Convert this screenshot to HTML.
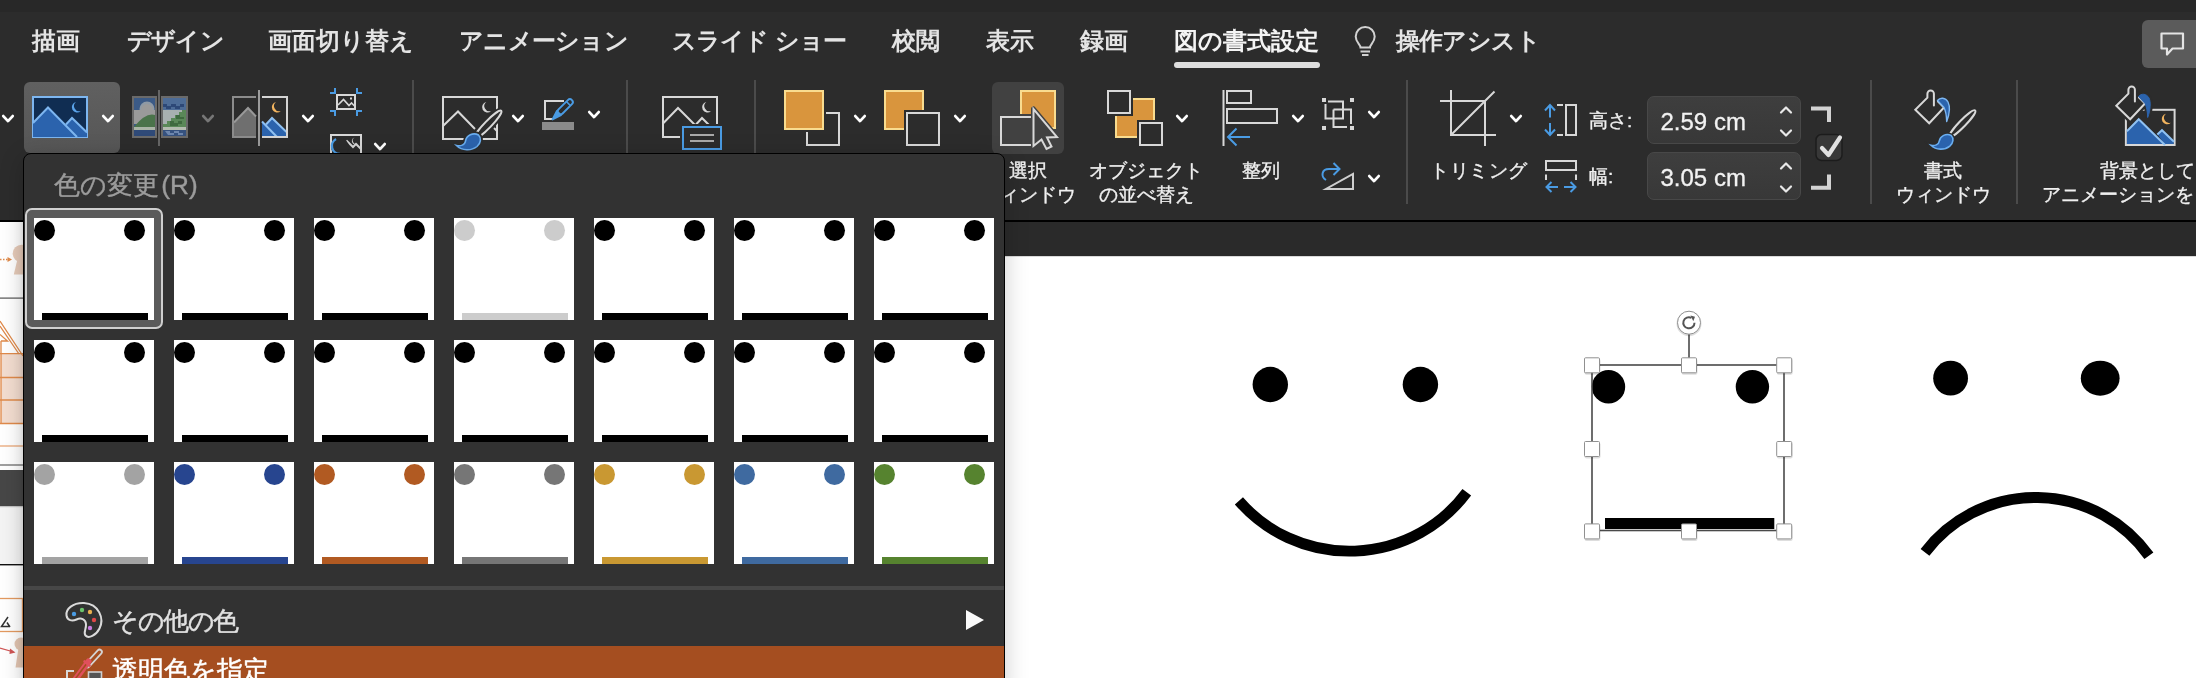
<!DOCTYPE html>
<html lang="ja">
<head>
<meta charset="utf-8">
<title>PowerPoint</title>
<style>
*{box-sizing:border-box;margin:0;padding:0}
html,body{width:2196px;height:678px;overflow:hidden;background:#2c2c2c}
body{position:relative;font-family:"Liberation Sans",sans-serif;color:#ececec}
.abs{position:absolute}
#titlebar{position:absolute;left:0;top:0;width:2196px;height:12px;background:#282828}
#ribbon{position:absolute;left:0;top:12px;width:2196px;height:208px;background:#2c2c2c}
#ribbonline{position:absolute;left:0;top:220px;width:2196px;height:2px;background:#000}
#below{position:absolute;left:0;top:222px;width:2196px;height:34px;background:#2a2a2a}
.tab{position:absolute;top:26px;height:30px;line-height:30px;font-size:24px;font-weight:bold;color:#e4e4e4;white-space:nowrap}
.tab.on{color:#f4f4f4}
.lbl{position:absolute;font-size:19px;line-height:24px;color:#f0f0f0;white-space:nowrap;text-align:center;-webkit-text-stroke:.35px #f0f0f0}
.sep{position:absolute;top:80px;width:2px;height:124px;background:#4b4b4b}
.btnbg{position:absolute;border-radius:6px}
.field{position:absolute;left:1647px;width:154px;height:48px;border-radius:7px;border:1px solid #484848;background:linear-gradient(#3e3e3e,#383838);font-size:24px;line-height:49px;color:#f2f2f2;padding-left:12.5px;-webkit-text-stroke:.3px #f2f2f2;white-space:nowrap}
#icons{position:absolute;left:0;top:0;width:2196px;height:222px}
#slide{position:absolute;left:1004px;top:256px;width:1192px;height:422px;background:#fff;border-top:1px solid #dadada}
#leftstrip{position:absolute;left:0;top:222px;width:24px;height:456px;background:#fff;overflow:hidden}
#popup{position:absolute;left:23px;top:153px;width:982px;height:540px;background:#323232;border:1px solid #000;border-radius:8px 8px 0 0;box-shadow:0 5px 24px rgba(0,0,0,.2);overflow:hidden}
#popin{position:absolute;left:0;top:-1px;width:980px;height:540px}
#popup .title{position:absolute;left:30px;top:16px;font-size:26.2px;line-height:32px;color:#9c9c9c;white-space:nowrap;word-spacing:-5px;-webkit-text-stroke:.4px #9c9c9c}
.th{position:absolute;width:120px;height:102px;background:#fff;overflow:hidden}
.th i{position:absolute;top:2px;width:21px;height:21px;border-radius:50%;background:var(--c)}
.th i.l{left:0}
.th i.r{left:90px}
.th b{position:absolute;left:8px;top:95px;width:106px;height:7px;background:var(--c)}
#selring{position:absolute;left:1px;top:55px;width:138px;height:121px;border:2px solid #cfcfcf;border-radius:7px;background:#5b5b5b}
#popsep{position:absolute;left:0;top:433px;width:980px;height:4px;background:#474747}
.mi{position:absolute;left:0;width:980px;height:56px}
.mi span{position:absolute;left:89px;font-size:25.5px;line-height:32px;white-space:nowrap;-webkit-text-stroke:.45px currentColor}
#mi2{top:493px;background:#a54e20;height:60px}
</style>
</head>
<body>
<div id="titlebar"></div>
<div id="ribbon"></div>

<!-- ribbon tabs -->
<div class="tab" style="left:32px">描画</div>
<div class="tab" style="left:127px;letter-spacing:-0.8px">デザイン</div>
<div class="tab" style="left:268px">画面切り替え</div>
<div class="tab" style="left:459px;letter-spacing:-0.75px">アニメーション</div>
<div class="tab" style="left:672px;letter-spacing:-1.1px;word-spacing:2.3px">スライド ショー</div>
<div class="tab" style="left:892px">校閲</div>
<div class="tab" style="left:986px">表示</div>
<div class="tab" style="left:1080px">録画</div>
<div class="tab on" style="left:1174px">図の書式設定</div>
<div class="abs" style="left:1174px;top:62px;width:146px;height:6px;border-radius:3px;background:#dedede"></div>
<div class="tab" style="left:1395.5px;letter-spacing:-0.55px">操作アシスト</div>
<div class="btnbg" style="left:2142px;top:20px;width:70px;height:48px;background:#5b5b5b"></div>

<!-- highlighted buttons -->
<div class="btnbg" style="left:24px;top:82px;width:96px;height:71px;background:linear-gradient(#606060,#565656)"></div>
<div class="btnbg" style="left:992px;top:82px;width:72px;height:72px;background:#414141"></div>

<!-- separators -->
<div class="sep" style="left:412px"></div>
<div class="sep" style="left:626px"></div>
<div class="sep" style="left:754px"></div>
<div class="sep" style="left:1406px"></div>
<div class="sep" style="left:1870px"></div>
<div class="sep" style="left:2016px"></div>

<!-- ribbon labels -->
<div class="lbl" style="left:968px;top:159px;width:120px">選択<br>ウィンドウ</div>
<div class="lbl" style="left:1076px;top:159px;width:140px">オブジェクト<br>の並べ替え</div>
<div class="lbl" style="left:1221px;top:159px;width:80px">整列</div>
<div class="lbl" style="left:1419px;top:159px;width:120px;letter-spacing:.6px">トリミング</div>
<div class="lbl" style="left:1589px;top:109px;text-align:left">高さ:</div>
<div class="lbl" style="left:1589px;top:165px;text-align:left">幅:</div>
<div class="field" style="top:96px">2.59 cm</div>
<div class="field" style="top:152px">3.05 cm</div>
<div class="lbl" style="left:1883px;top:159px;width:120px">書式<br>ウィンドウ</div>
<div class="lbl" style="left:2100px;top:159px;text-align:left">背景として</div>
<div class="lbl" style="left:2041.5px;top:183px;text-align:left">アニメーションを</div>

<svg id="icons" width="2196" height="222" viewBox="0 0 2196 222" fill="none" stroke-linejoin="miter">
<defs>
<symbol id="cv" viewBox="0 0 12 8" overflow="visible"><path d="M1.300 1.100 L6 6.100 L10.700 1.100" stroke-width="2.800" stroke-linecap="round" stroke-linejoin="round" fill="none"/></symbol>
<g id="pic">
  <path d="M1 27 L16 11.5 L45 41 L1 41Z" class="mf"/>
  <path d="M34 28.5 L40 22 L55 36.5 L55 41 L45 41Z" class="mf"/>
  <path d="M1 27 L16 11.5 L45 41" class="ml"/>
  <path d="M34 28.5 L40 22 L55 36.5" class="ml"/>
</g>
</defs>
<style>
.w{stroke:#d8d8d8;stroke-width:2}
.bl{stroke:#4a9be3;stroke-width:2}
.og{fill:#d9953d;stroke:#f9dc8f;stroke-width:2}
.cw{stroke:#fff}
.cg{stroke:#777}
</style>
<!-- chevrons -->
<g class="cw">
<use href="#cv" x="2" y="115" width="12" height="8"/>
<use href="#cv" x="102" y="115" width="12" height="8"/>
<use href="#cv" x="302" y="115" width="12" height="8"/>
<use href="#cv" x="374" y="143" width="12" height="8"/>
<use href="#cv" x="512" y="115" width="12" height="8"/>
<use href="#cv" x="588" y="111" width="12" height="8"/>
<use href="#cv" x="854" y="115" width="12" height="8"/>
<use href="#cv" x="954" y="115" width="12" height="8"/>
<use href="#cv" x="1176" y="115" width="12" height="8"/>
<use href="#cv" x="1292" y="115" width="12" height="8"/>
<use href="#cv" x="1368" y="111" width="12" height="8"/>
<use href="#cv" x="1368" y="175" width="12" height="8"/>
<use href="#cv" x="1510" y="115" width="12" height="8"/>
</g>
<g class="cg"><use href="#cv" x="202" y="115" width="12" height="8"/></g>

<!-- 1 colour (selected) -->
<g transform="translate(32,96)">
  <rect x="1" y="1" width="54" height="40" fill="#102d52" stroke="#7db6f0" stroke-width="2"/>
  <g style="--f:#2b63ad"><path d="M1 27 L16 11.5 L45 41 L1 41Z" fill="#2b63ad"/><path d="M34 28.5 L40 22 L55 36.5 L55 41 L45 41Z" fill="#2b63ad"/>
  <path d="M1 27 L16 11.5 L45 41" stroke="#7db6f0" stroke-width="2"/><path d="M34 28.5 L40 22 L55 36.5" stroke="#7db6f0" stroke-width="2"/></g>
  <path d="M44 6 a5.28 5.28 0 1 0 4.8 8.9 a5.13 5.13 0 0 1 -4.8 -8.9z" fill="#5aa3ea"/>
</g>

<!-- 2 artistic effects (disabled) -->
<g>
  <rect x="133" y="97" width="23" height="40" fill="#3b5a86" stroke="#6a6a6a" stroke-width="2"/>
  <circle cx="147" cy="109" r="7.5" fill="#8f9aa5"/><circle cx="147" cy="110" r="6" fill="#9a9a9a"/><rect x="134" y="110" width="21" height="14" fill="#9a9a9a"/>
  <path d="M134 127 Q146 112 155 115 L155 128 L134 128Z" fill="#4a734a"/>
  <rect x="134" y="127" width="21" height="3" fill="#a9b4a6"/>
  <rect x="134" y="130" width="21" height="6" fill="#2f4a78"/>
  <rect x="162" y="97" width="25" height="40" fill="#4d6c97" stroke="#6a6a6a" stroke-width="2"/>
  <path d="M163 104h4v2h4v-2h5v2h4v-2h4v3h-4v2h-5v-2h-4v2h-5v-2h-3z" fill="#2d4877"/>
  <path d="M163 110 h23 v14 h-23z" fill="#a8b0b0"/>
  <path d="M186 110 v18 h-23 v-4 h4v-3h4v-3h4v-3h4v-3h3v-2z" fill="#5a8858"/>
  <path d="M170 121h4v2h4v-2h4v3h-4v2h-8z M176 115h4v2h4v2h-8z" fill="#3f6a3f"/>
  <rect x="163" y="127" width="23" height="3" fill="#b4bcb0"/>
  <rect x="163" y="130" width="23" height="6" fill="#36527f"/>
  <path d="M165 131h5v2h4v-2h5v2h4v2h-5v-2h-4v2h-6z" fill="#6d86ad"/>
  <path d="M159 90 V146" stroke="#666" stroke-width="2"/>
</g>

<!-- 3 transparency -->
<g>
  <path d="M234 122.5 L248 108 L256 116.5 L256 136 L234 136Z" fill="#6f6f6f"/>
  <path d="M234 122.5 L248 108 L256 116.5" stroke="#999" stroke-width="2"/>
  <path d="M256 97 H233 V137 H256" stroke="#8c8c8c" stroke-width="2"/>
  <path d="M262 121 L277 136 L262 136Z" fill="#2b63ad"/>
  <path d="M266 124.5 L272 118 L286 132.5 L286 136 L277 136Z" fill="#2b63ad"/>
  <path d="M262 121.5 L277 137" stroke="#8fc1f2" stroke-width="2"/>
  <path d="M266 124.5 L272 118 L287 132.5" stroke="#8fc1f2" stroke-width="2"/>
  <path d="M262 97 H287 V137 H262" stroke="#d4d4d4" stroke-width="2"/>
  <path d="M276 102 a5.28 5.28 0 1 0 4.8 8.9 a5.13 5.13 0 0 1 -4.8 -8.9z" fill="#f2b45f"/>
  <path d="M259 90 V146" stroke="#9c9c9c" stroke-width="2"/>
</g>

<!-- 4 compress -->
<g>
  <rect x="337" y="95" width="18" height="14" class="w"/>
  <path d="M338 105 L343.5 99.5 L349 105.5 L351.5 103 L354.5 106" stroke="#d8d8d8" stroke-width="1.6"/>
  <rect x="350" y="97.5" width="2" height="2" fill="#d8d8d8"/>
  <path d="M330 93 H335 V88 M362 93 H357 V88 M330 111 H335 V116 M362 111 H357 V116" class="bl"/>
</g>
<!-- 5 reset -->
<g>
  <rect x="331" y="135" width="30" height="24" class="w"/>
  <path d="M339 148 L347 141 L353 147 L356 144 L361 149" class="w"/>
  <path d="M354.5 137.5 A3.6 3.6 0 1 0 358 143.5 A3.4 3.4 0 0 1 354.5 137.5Z" fill="#d8d8d8"/>
  <circle cx="340" cy="147" r="9" fill="#2c2c2c"/>
  <path d="M336 139 A8 8 0 0 0 340 154" stroke="#4a9be3" stroke-width="2.4"/>
</g>

<!-- 6 picture + brush -->
<g>
  <rect x="443" y="97" width="54" height="42" class="w"/>
  <path d="M443 126 L458 111.5 L475 129" class="w"/>
  <path d="M494 128 L497 131" class="w"/>
  <path d="M486.3 102 a5.28 5.28 0 1 0 4.8 8.9 a5.13 5.13 0 0 1 -4.8 -8.9z" fill="#d8d8d8"/>
  <ellipse cx="488" cy="124.5" rx="19" ry="3.4" transform="rotate(-46 488 124.5)" fill="#2c2c2c" stroke="#2c2c2c" stroke-width="6"/>
  <ellipse cx="488" cy="124.5" rx="19" ry="3.4" transform="rotate(-46 488 124.5)" fill="#2c2c2c" stroke="#d8d8d8" stroke-width="2"/>
  <path d="M478.5 135 C473 132 466.5 135.5 465.5 141 C465 145 460.5 146.5 456.5 145.5 C462 151 471.5 151 477 146.5 C481 143 481.5 138 478.5 135Z" fill="#2b63ad" stroke="#2c2c2c" stroke-width="5"/>
  <path d="M478.5 135 C473 132 466.5 135.5 465.5 141 C465 145 460.5 146.5 456.5 145.5 C462 151 471.5 151 477 146.5 C481 143 481.5 138 478.5 135Z" fill="#2b63ad" stroke="#6aaef0" stroke-width="1.6"/>
</g>

<!-- 7 border pen -->
<g>
  <path d="M564 101 H545 V119 H553" class="w"/>
  <rect x="542" y="122" width="32" height="8" fill="#8b8b8b"/>
  <g transform="translate(552.500 119.500) rotate(45)">
    <rect x="-2.900" y="-27.500" width="5.800" height="19" rx="2.900" fill="#2c2c2c" stroke="#4a9be3" stroke-width="1.900"/>
    <path d="M-2.900 -9 L0 0 L2.900 -9Z" fill="#4a9be3" stroke="#4a9be3" stroke-width="1.900" stroke-linejoin="round"/>
    <path d="M-2.900 -22.500 H2.900" stroke="#4a9be3" stroke-width="1.500"/>
  </g>
</g>

<!-- 8 alt text -->
<g>
  <rect x="663" y="97" width="54" height="40" class="w"/>
  <path d="M663 123.5 L678 108 L696 126" class="w"/>
  <path d="M696 124.5 L702 118 L709 125" class="w"/>
  <path d="M706.3 102 a5.28 5.28 0 1 0 4.8 8.9 a5.13 5.13 0 0 1 -4.8 -8.9z" fill="#d8d8d8"/>
  <rect x="680" y="124" width="45" height="28" fill="#2c2c2c"/>
  <rect x="683" y="127" width="38" height="22" fill="#2c2c2c" class="bl"/>
  <path d="M690 135 H714 M690 141 H714" stroke="#a9a9a9" stroke-width="2"/>
</g>

<!-- 9 bring forward -->
<g>
  <rect x="807" y="113" width="32" height="32" class="w"/>
  <rect x="782" y="88" width="44" height="44" fill="#2c2c2c"/>
  <rect x="785" y="91" width="38" height="38" class="og"/>
</g>
<!-- 10 send backward -->
<g>
  <rect x="885" y="91" width="38" height="38" class="og"/>
  <rect x="904" y="110" width="38" height="38" fill="#2c2c2c"/>
  <rect x="907" y="113" width="32" height="32" class="w"/>
</g>
<!-- 11 selection pane -->
<g>
  <rect x="1021" y="91" width="34" height="37" class="og"/>
  <rect x="998" y="114" width="39" height="34" fill="#414141"/>
  <rect x="1001" y="117" width="33" height="28" class="w"/>
  <path d="M1033.5 109 L1033.5 146 L1041.5 139.5 L1046.5 149 L1051.5 146.5 L1047 137.5 L1057 137Z" fill="#414141" stroke="#414141" stroke-width="5" stroke-linejoin="round"/>
  <path d="M1033.5 109 L1033.5 146 L1041.5 139.5 L1046.5 149 L1051.5 146.5 L1047 137.5 L1057 137Z" fill="#414141" class="w"/>
</g>
<!-- 12 reorder -->
<g>
  <rect x="1116" y="99" width="38" height="38" class="og"/>
  <rect x="1105" y="88" width="28" height="28" fill="#2c2c2c"/>
  <rect x="1108" y="91" width="22" height="22" class="w"/>
  <rect x="1137" y="120" width="28" height="28" fill="#2c2c2c"/>
  <rect x="1140" y="123" width="22" height="22" class="w"/>
</g>
<!-- 13 align -->
<g>
  <path d="M1223.5 90 V146" class="w"/>
  <rect x="1227" y="91" width="24" height="12" class="w"/>
  <rect x="1227" y="109" width="50" height="14" class="w"/>
  <path d="M1250 137 H1228.5 M1236.5 128.5 L1228 137 L1236.5 145.5" class="bl" stroke-width="2.2"/>
</g>
<!-- 14 group -->
<g>
  <path d="M1328 101.5 H1343 V118.5 H1325.5 V104" class="w"/>
  <path d="M1333.500 109.500 H1351 V124 M1347 127 H1333.500 V109.500" class="w"/>
  <rect x="1322" y="98" width="4" height="4" fill="#d8d8d8"/><rect x="1350" y="98" width="4" height="4" fill="#d8d8d8"/>
  <rect x="1322" y="126" width="4" height="4" fill="#d8d8d8"/><rect x="1350" y="126" width="4" height="4" fill="#d8d8d8"/>
</g>
<!-- 15 rotate -->
<g>
  <path d="M1326 189 H1353 V174Z" stroke="#cfcfcf" stroke-width="2"/>
  <path d="M1326 180 C1320.5 176.500 1321.500 169 1329 169 H1339 M1333.5 163 L1339.500 169 L1333.5 175" class="bl" stroke-width="2.2"/>
</g>
<!-- 16 crop -->
<g>
  <path d="M1451 90 V135 H1496 M1440 101 H1485 V146 M1451.5 134.500 L1494.5 91.5" class="w" stroke-width="2.2"/>
</g>
<!-- 17 height -->
<g>
  <path d="M1550 105.500 V117.500 M1550 123 V134.500 M1545 110.500 L1550 105 L1555 110.500 M1545 129.500 L1550 135 L1555 129.500" class="bl" stroke-width="2.2"/>
  <rect x="1566" y="105" width="10" height="30" class="w"/>
  <path d="M1557 105 H1563 M1557 135 H1563" class="w"/>
</g>
<!-- 18 width -->
<g>
  <rect x="1546" y="161" width="30" height="9" class="w"/>
  <path d="M1546 174.500 V180 M1576 174.500 V180" class="w"/>
  <path d="M1546.500 187 H1558 M1564 187 H1575.500 M1551.500 182 L1546.500 187 L1551.500 192 M1570.500 182 L1575.500 187 L1570.500 192" class="bl" stroke-width="2.2"/>
</g>
<!-- steppers -->
<g stroke="#e8e8e8" stroke-width="2.2" stroke-linecap="round" stroke-linejoin="round">
  <path d="M1781 112.500 L1786 107.500 L1791 112.500 M1781 130.500 L1786 135.500 L1791 130.500"/>
  <path d="M1781 168.500 L1786 163.500 L1791 168.500 M1781 186.500 L1786 191.500 L1791 186.500"/>
</g>
<!-- aspect lock -->
<g>
  <path d="M1811 108.500 H1829 V122 M1811 187.800 H1829 V174.500" stroke="#d2d2d2" stroke-width="4"/>
  <rect x="1816" y="134.500" width="26" height="26" rx="5.5" fill="#383838" stroke="#1c1c1c" stroke-width="1.5"/>
  <path d="M1822 148 L1828.500 155 L1840 137.500" stroke="#e2e2e2" stroke-width="4.200" stroke-linecap="round" stroke-linejoin="round"/>
</g>
<!-- format pane -->
<g>
  <path d="M1938 101.500 L1944 107.500 L1929.200 123.300 L1915.300 109.700 L1927.400 97.700 V93.700 A3.250 3.250 0 0 1 1933.900 93.700 V105.500" class="w" stroke-linecap="round" stroke-linejoin="miter"/>
  <path d="M1937.500 100.500 C1940 97.300 1945.500 97.300 1948 102 C1950 106 1949.500 114 1946.700 121.500 C1946.500 115 1945.500 110.500 1944 107.500Z" fill="#2b63ad" stroke="#7db6f0" stroke-width="1.400" stroke-linejoin="round"/>
  <ellipse cx="1962.500" cy="123.500" rx="18.200" ry="3.300" transform="rotate(-46 1962.500 123.500)" fill="#2c2c2c" stroke="#d8d8d8" stroke-width="2"/>
  <g transform="translate(1942 142) scale(.92) translate(-1942 -142)"><path d="M1952 135 C1946.500 132 1940 135.500 1939 141 C1938.500 145 1934 146.500 1930 145.500 C1935.500 151 1945 151 1950.500 146.500 C1954.500 143 1955 138 1952 135Z" fill="#2b63ad" stroke="#2c2c2c" stroke-width="4.500"/>
  <path d="M1952 135 C1946.500 132 1940 135.500 1939 141 C1938.500 145 1934 146.500 1930 145.500 C1935.500 151 1945 151 1950.500 146.500 C1954.500 143 1955 138 1952 135Z" fill="#2b63ad" stroke="#6aaef0" stroke-width="1.700"/></g>
</g>
<!-- background animation -->
<g>
  <rect x="2125.900" y="109.800" width="48.700" height="35.200" class="w"/>
  <path d="M2126.900 131 L2138.700 119 L2164.500 144 H2126.900Z" fill="#2b63ad"/>
  <path d="M2157.500 134.500 L2162 130.200 L2173.600 141.400 V144 H2164.500Z" fill="#2b63ad"/>
  <path d="M2126.900 131.200 L2138.700 119.200 L2165 145" stroke="#8fc1f2" stroke-width="2"/>
  <path d="M2157.300 134.600 L2162 130.200 L2174 141.800" stroke="#8fc1f2" stroke-width="2"/>
  <path d="M2166 113.800 a5.280 5.280 0 1 0 4.800 8.900 a5.130 5.130 0 0 1 -4.800 -8.900z" fill="#f2b45f"/>
  <g transform="translate(201 -4)">
    <path d="M1929.500 93 L1947 107.500 L1929.200 126 L1912 109.700Z" fill="#2c2c2c"/>
    <path d="M1938 101.500 L1944 107.500 L1929.200 123.300 L1915.300 109.700 L1927.400 97.700 V93.700 A3.250 3.250 0 0 1 1933.900 93.700 V105.500" stroke="#2c2c2c" stroke-width="6.500" stroke-linecap="round"/>
    <path d="M1937.500 100.500 C1940 97.300 1945.500 97.300 1948 102 C1950 106 1949.500 114 1946.700 121.500 C1946.500 115 1945.500 110.500 1944 107.500Z" fill="#2c2c2c" stroke="#2c2c2c" stroke-width="5"/>
    <path d="M1938 101.500 L1944 107.500 L1929.200 123.300 L1915.300 109.700 L1927.400 97.700 V93.700 A3.250 3.250 0 0 1 1933.900 93.700 V105.500" class="w" stroke-linecap="round"/>
    <path d="M1937.500 100.500 C1940 97.300 1945.500 97.300 1948 102 C1950 106 1949.500 114 1946.700 121.500 C1946.500 115 1945.500 110.500 1944 107.500Z" fill="#2b63ad" stroke="#2b63ad" stroke-width="1" stroke-linejoin="round"/>
  </g>
</g>
<!-- bulb -->
<g>
  <path d="M1360.500 47.500 C1360.500 44.500 1355.700 42.500 1355.700 36.500 A9.500 9.500 0 1 1 1374.700 36.500 C1374.700 42.500 1370 44.500 1370 47.500Z" stroke="#d2d2d2" stroke-width="2"/>
  <path d="M1360.500 51.500 H1370 M1362 55 H1368.500" stroke="#d2d2d2" stroke-width="1.800"/>
</g>
<!-- comment -->
<path d="M2161.500 33.500 H2183 V48.500 H2172.500 L2167 54.500 V48.500 H2161.500Z" stroke="#e4e4e4" stroke-width="2.200" stroke-linejoin="round"/>
</svg>

<div id="ribbonline"></div>
<div id="below"></div>
<div id="slide">
<svg id="slidesvg" style="position:absolute;left:0;top:-1px" width="1192" height="422" viewBox="1004 256 1192 422" fill="none">
  <!-- happy face -->
  <circle cx="1270.300" cy="384.500" r="17.700" fill="#000"/>
  <circle cx="1420.400" cy="384.500" r="17.700" fill="#000"/>
  <path d="M1238.900 500.900 A146.500 146.500 0 0 0 1466.800 492.300" stroke="#000" stroke-width="10.800"/>
  <!-- neutral face (selected picture) -->
  <circle cx="1608.500" cy="386.800" r="16.700" fill="#000"/>
  <circle cx="1752.400" cy="386.800" r="16.700" fill="#000"/>
  <rect x="1605" y="518" width="169.300" height="11" fill="#000"/>
  <rect x="1592" y="365" width="192" height="165.500" stroke="#4a4a4a" stroke-width="1.600"/>
  <path d="M1689 334 V358" stroke="#4a4a4a" stroke-width="1.600"/>
  <g fill="#000" opacity=".13">
    <rect x="1584.5" y="358.8" width="16" height="16" rx="2"/>
    <rect x="1681.5" y="358.8" width="16" height="16" rx="2"/>
    <rect x="1776.7" y="358.8" width="16" height="16" rx="2"/>
    <rect x="1584.5" y="442.5" width="16" height="16" rx="2"/>
    <rect x="1776.7" y="442.5" width="16" height="16" rx="2"/>
    <rect x="1584.5" y="524.9" width="16" height="16" rx="2"/>
    <rect x="1681.5" y="524.9" width="16" height="16" rx="2"/>
    <rect x="1776.7" y="524.9" width="16" height="16" rx="2"/>
    <circle cx="1689" cy="323.700" r="12.500"/>
  </g>
  <g fill="#fff" stroke="#909090" stroke-width="1">
    <rect x="1584.5" y="357.8" width="15" height="15" rx="1"/>
    <rect x="1681.5" y="357.8" width="15" height="15" rx="1"/>
    <rect x="1776.7" y="357.8" width="15" height="15" rx="1"/>
    <rect x="1584.5" y="441.5" width="15" height="15" rx="1"/>
    <rect x="1776.7" y="441.5" width="15" height="15" rx="1"/>
    <rect x="1584.5" y="523.9" width="15" height="15" rx="1"/>
    <rect x="1681.5" y="523.9" width="15" height="15" rx="1"/>
    <rect x="1776.7" y="523.9" width="15" height="15" rx="1"/>
    <circle cx="1689" cy="322.700" r="11.500"/>
  </g>
  <path d="M1694.500 322.700 A5.600 5.600 0 1 1 1691.500 317.800" stroke="#555" stroke-width="2"/>
  <path d="M1690.500 315.500 L1695 316.800 L1693.300 321.200Z" fill="#555"/>
  <!-- sad face -->
  <circle cx="1950.600" cy="378.200" r="17.400" fill="#000"/>
  <ellipse cx="2100.200" cy="378.200" rx="19.400" ry="17.500" fill="#000"/>
  <path d="M1925 552.300 A139.200 139.200 0 0 1 2148.900 555.800" stroke="#000" stroke-width="11"/>
</svg>
</div>
<div id="leftstrip">
<svg width="24" height="456" viewBox="0 222 24 456" fill="none">
  <defs><linearGradient id="lg" x1="0" x2="1" y1="0" y2="0"><stop offset="0" stop-color="#fff"/><stop offset=".55" stop-color="#f4f4f4"/><stop offset="1" stop-color="#bdbdbd"/></linearGradient></defs>
  <rect x="0" y="222" width="24" height="456" fill="#fff"/>
  <!-- slide thumb 1 -->
  <path d="M0 259.500 H8" stroke="#e08a4a" stroke-width="1.400" stroke-dasharray="1.500 1.500"/>
  <path d="M7.500 257 L12 259.500 L7.500 262Z" fill="#e08a4a"/>
  <circle cx="21.500" cy="253.500" r="8.800" fill="#e6cbb9"/>
  <path d="M17.500 259 L13.800 274.500 H24 V259Z" fill="#e6cbb9"/>
  <rect x="0" y="297.500" width="24" height="1.200" fill="#555"/>
  <!-- slide thumb 2: house -->
  <rect x="1" y="354" width="23" height="70" fill="#f3ddd0"/>
  <path d="M0 321 L23 356 M0 326 L19 354" stroke="#e08a4a" stroke-width="1.300"/>
  <path d="M0 334.500 L7.500 341 H1" stroke="#e08a4a" stroke-width="1.300"/>
  <path d="M1 341 V424 M0 353.600 H24 M0 377.500 H24 M0 400 H24 M0 423.500 H24" stroke="#e08a4a" stroke-width="1.300"/>
  <path d="M0 446 H24" stroke="#e9a878" stroke-width="1.300"/>
  <rect x="0" y="464" width="24" height="2" fill="#a0a0a0"/>
  <rect x="0" y="470" width="24" height="36" fill="#474747"/>
  <rect x="0" y="506" width="24" height="1.500" fill="#c4c4c4"/>
  <rect x="0" y="507.500" width="24" height="56.500" fill="#f4f4f4"/>
  <rect x="0" y="564" width="24" height="1.400" fill="#111"/>
  <!-- slide thumb 3 -->
  <rect x="-1" y="598.500" width="23.500" height="33" stroke="#e39a60" stroke-width="1.300" fill="#fff"/>
  <path d="M8 617 L1.500 626.500 H9.500 M7 622.500 L10 627" stroke="#333" stroke-width="1.500"/>
  <path d="M0 648 L12 651.500" stroke="#d05555" stroke-width="1.300"/>
  <path d="M10 648.500 L15.500 652.500 L9.500 654Z" fill="#d05555"/>
  <circle cx="21" cy="644" r="6.500" fill="#e3c6b2"/>
  <path d="M18.500 648 L15.500 667.500 H24 V648Z" fill="#e3c6b2"/>
  <rect x="13" y="222" width="11" height="456" fill="url(#lg)" opacity=".32" style="mix-blend-mode:multiply"/>
  <rect x="23" y="222" width="1" height="456" fill="#1a1a1a"/>
</svg>
</div>

<!-- colour-change popup -->
<div id="popup"><div id="popin">
  <div class="title">色の変更 (R)</div>
  <div id="selring"></div>
  <div class="th" style="left:10px;top:65px;--c:#000"><i class="l"></i><i class="r"></i><b></b></div>
  <div class="th" style="left:150px;top:65px;--c:#000"><i class="l"></i><i class="r"></i><b></b></div>
  <div class="th" style="left:290px;top:65px;--c:#000"><i class="l"></i><i class="r"></i><b></b></div>
  <div class="th" style="left:430px;top:65px;--c:#ccc"><i class="l"></i><i class="r"></i><b></b></div>
  <div class="th" style="left:570px;top:65px;--c:#000"><i class="l"></i><i class="r"></i><b></b></div>
  <div class="th" style="left:710px;top:65px;--c:#000"><i class="l"></i><i class="r"></i><b></b></div>
  <div class="th" style="left:850px;top:65px;--c:#000"><i class="l"></i><i class="r"></i><b></b></div>
  <div class="th" style="left:10px;top:187px;--c:#000"><i class="l"></i><i class="r"></i><b></b></div>
  <div class="th" style="left:150px;top:187px;--c:#000"><i class="l"></i><i class="r"></i><b></b></div>
  <div class="th" style="left:290px;top:187px;--c:#000"><i class="l"></i><i class="r"></i><b></b></div>
  <div class="th" style="left:430px;top:187px;--c:#000"><i class="l"></i><i class="r"></i><b></b></div>
  <div class="th" style="left:570px;top:187px;--c:#000"><i class="l"></i><i class="r"></i><b></b></div>
  <div class="th" style="left:710px;top:187px;--c:#000"><i class="l"></i><i class="r"></i><b></b></div>
  <div class="th" style="left:850px;top:187px;--c:#000"><i class="l"></i><i class="r"></i><b></b></div>
  <div class="th" style="left:10px;top:309px;--c:#a3a3a3"><i class="l"></i><i class="r"></i><b></b></div>
  <div class="th" style="left:150px;top:309px;--c:#27458f"><i class="l"></i><i class="r"></i><b></b></div>
  <div class="th" style="left:290px;top:309px;--c:#b15a22"><i class="l"></i><i class="r"></i><b></b></div>
  <div class="th" style="left:430px;top:309px;--c:#767676"><i class="l"></i><i class="r"></i><b></b></div>
  <div class="th" style="left:570px;top:309px;--c:#c99832"><i class="l"></i><i class="r"></i><b></b></div>
  <div class="th" style="left:710px;top:309px;--c:#3f6aa0"><i class="l"></i><i class="r"></i><b></b></div>
  <div class="th" style="left:850px;top:309px;--c:#56832f"><i class="l"></i><i class="r"></i><b></b></div>
  <div id="popsep"></div>

  <div class="mi" id="mi1" style="top:437px"><span style="top:15px;left:88px;letter-spacing:-1.4px;color:#e2e2e2">その他の色</span></div>
  <div class="mi" id="mi2"><span style="top:8px;left:88px;color:#fff">透明色を指定</span></div>
<svg style="position:absolute;left:0;top:437px" width="200" height="120" viewBox="24 590 200 120" fill="none">
  <!-- palette -->
  <path d="M84 603 C73 602.500 65.500 609 66.500 615.500 C67.300 620.500 72 621.500 76.500 619.500 C81 617.500 85.500 619 86 624 C86.500 629 83 632.500 85.500 635.500 C88.500 639 96 635.500 99.500 628.500 C104.500 618.500 99 604 84 603Z" stroke="#dadada" stroke-width="2"/>
  <circle cx="74" cy="614" r="2.200" fill="#4a9be3"/>
  <circle cx="82" cy="610" r="2.200" fill="#6bc46b"/>
  <circle cx="90" cy="612" r="2.200" fill="#eab04e"/>
  <circle cx="94" cy="620" r="2.200" fill="#e04848"/>
  <circle cx="90" cy="628" r="2.200" fill="#c87be0"/>
  <!-- eyedropper -->
  <rect x="88.500" y="672" width="13" height="10" fill="#555" stroke="#d0d0d0" stroke-width="1.600"/>
  <path d="M67 680 V671 H74" stroke="#d8d8d8" stroke-width="2"/>
  <path d="M99.500 652 L87.500 665" stroke="#d4d4d4" stroke-width="6.500" stroke-linecap="round"/>
  <path d="M99.500 652 L88 664.500" stroke="#a54e20" stroke-width="3" stroke-linecap="round"/>
  <path d="M88.500 661.500 L72 684" stroke="#e0505c" stroke-width="6" stroke-linecap="round"/>
  <path d="M86 664.500 L73 682" stroke="#a54e20" stroke-width="1.600" stroke-linecap="round"/>
  <path d="M84.500 661.500 L89.500 665.500" stroke="#e0505c" stroke-width="2.600" stroke-linecap="round"/>
  <!-- submenu arrow drawn separately -->
</svg>
<div class="abs" style="left:942px;top:457px;width:0;height:0;border-left:18.5px solid #fafafa;border-top:10px solid transparent;border-bottom:10px solid transparent"></div>
</div></div>
</body>
</html>
